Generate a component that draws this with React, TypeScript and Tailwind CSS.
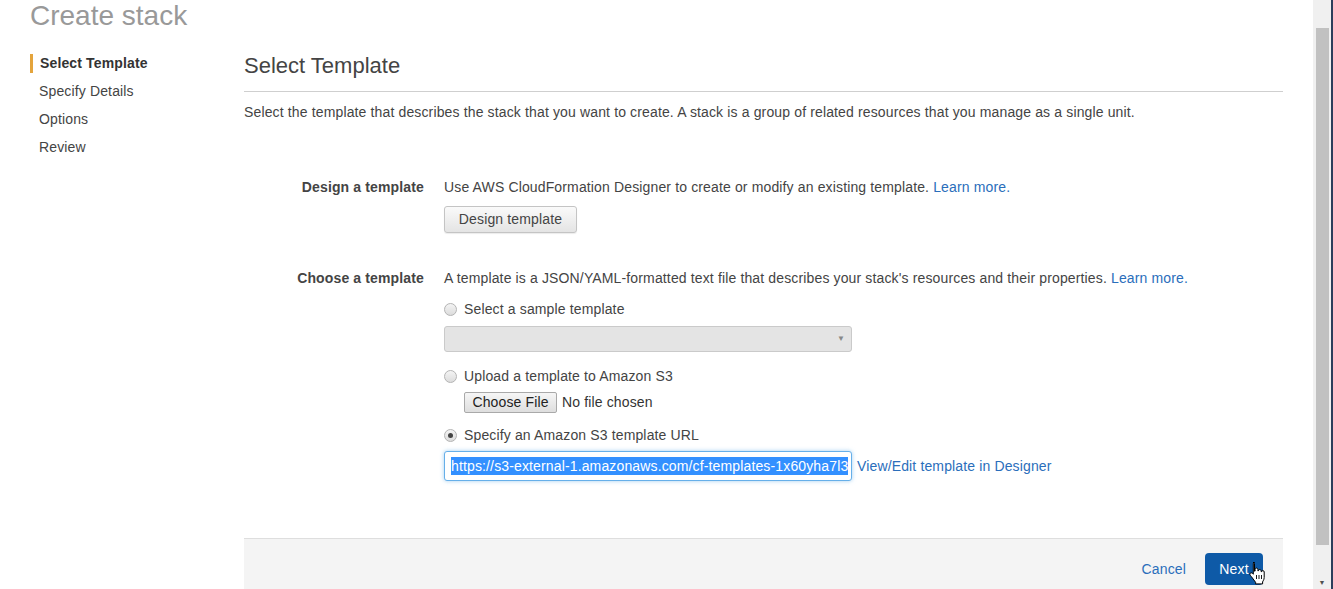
import React from 'react'

const font = { fontFamily: '"Liberation Sans", Arial, sans-serif' }

function Radio({ checked }: { checked?: boolean }) {
  return (
    <span className="w-[13px] h-[13px] rounded-full border border-[#b4b4b4] bg-gradient-to-b from-[#f4f4f4] to-[#dcdcdc] flex items-center justify-center shrink-0">
      {checked && <span className="w-[5px] h-[5px] rounded-full bg-[#444]" />}
    </span>
  )
}

function HandCursor() {
  return (
    <svg width="18" height="24" viewBox="0 0 18 24" className="absolute left-[1248px] top-[561px]">
      <path
        d="M5 1.5c.9 0 1.5.6 1.5 1.5v7.2l.6-.1V8.5c0-.9.6-1.4 1.4-1.4s1.4.6 1.4 1.4v1.4l.5-.1c0-.8.6-1.3 1.4-1.3s1.4.6 1.4 1.4v.9l.4-.1c.1-.7.6-1.1 1.3-1.1.8 0 1.3.6 1.3 1.4v5.4c0 1.4-.4 2.4-1 3.4l-.6 1.1v2H7.6v-1.6L3.5 15.8c-.8-.9-1.6-1.8-1.6-2.6 0-.8.7-1.4 1.5-1.3.4 0 .7.2 1 .4l.9.9V3c0-.9.4-1.5 1.2-1.5z"
        fill="#fff"
        stroke="#000"
        strokeWidth="1"
        strokeLinejoin="round"
      />
      <path d="M8.5 14v4M11 14v4M13.5 14v4" stroke="#000" strokeWidth="0.9" />
    </svg>
  )
}

export default function App() {
  const sidebar = ['Select Template', 'Specify Details', 'Options', 'Review']

  return (
    <div className="relative flex h-[589px] w-[1333px] overflow-hidden bg-white text-[14px] tracking-[0.14px] text-[#444]" style={font}>
      <div className="flex-1 flex flex-col">
        {/* page title */}
        <div className="h-[32px] pl-[30px] text-[28px] leading-[32px] tracking-normal text-[#999]">Create stack</div>

        <div className="flex pl-[30px] flex-1">
          {/* steps */}
          <div className="w-[214px] pt-[17px] flex flex-col">
            {sidebar.map((s, i) => (
              <div key={s} className="h-[28px] flex items-center">
                {i === 0 ? (
                  <>
                    <span className="w-[3px] h-[19px] bg-[#e4a43c] mr-[7px]" />
                    <span className="font-bold text-[#333]">{s}</span>
                  </>
                ) : (
                  <span className="pl-[9px] text-[#444]">{s}</span>
                )}
              </div>
            ))}
          </div>

          {/* main */}
          <div className="w-[1039px] flex flex-col pt-[22px]">
            <div className="h-[24px] leading-[24px] text-[22px] tracking-normal text-[#444]">Select Template</div>
            <div className="mt-[13px] border-b border-[#cfcfcf]" />
            <p className="mt-[10px] leading-[20px]">
              Select the template that describes the stack that you want to create. A stack is a group of related resources that you manage as a single unit.
            </p>

            {/* design row */}
            <div className="flex mt-[55px]">
              <div className="w-[180px] text-right font-bold leading-[20px]">Design a template</div>
              <div className="pl-[20px] flex flex-col items-start">
                <div className="leading-[20px]">
                  Use AWS CloudFormation Designer to create or modify an existing template.{' '}
                  <span className="text-[#2a6ebb]">Learn more.</span>
                </div>
                <button className="mt-[9px] w-[133px] h-[27px] rounded-[3px] border border-[#c4c4c4] bg-gradient-to-b from-[#fafafa] to-[#e4e4e4] text-[#444] text-[14px] tracking-[0.14px] shadow-[0_1px_1px_rgba(0,0,0,0.08)]">
                  Design template
                </button>
              </div>
            </div>

            {/* choose row */}
            <div className="flex mt-[35px]">
              <div className="w-[180px] text-right font-bold leading-[20px]">Choose a template</div>
              <div className="pl-[20px] flex flex-col items-start">
                <div className="leading-[20px]">
                  A template is a JSON/YAML-formatted text file that describes your stack's resources and their properties.{' '}
                  <span className="text-[#2a6ebb]">Learn more.</span>
                </div>

                <div className="mt-[11px] h-[20px] flex items-center gap-[7px]">
                  <Radio />
                  <span>Select a sample template</span>
                </div>
                <div className="mt-[7px] w-[408px] h-[26px] rounded-[3px] border border-[#cacaca] bg-[#e4e4e4] flex items-center justify-end pr-[6px]">
                  <span className="text-[8px] text-[#888]">▼</span>
                </div>

                <div className="mt-[14px] h-[20px] flex items-center gap-[7px]">
                  <Radio />
                  <span>Upload a template to Amazon S3</span>
                </div>
                <div className="mt-[6px] ml-[20px] flex items-center">
                  <button className="w-[93px] h-[21px] border border-[#a9a9a9] rounded-[2px] bg-gradient-to-b from-[#f6f6f6] to-[#dedede] text-[14px] tracking-[0.14px] text-[#222] leading-[19px]">
                    Choose File
                  </button>
                  <span className="ml-[5px] text-[#333]">No file chosen</span>
                </div>

                <div className="mt-[12px] h-[20px] flex items-center gap-[7px]">
                  <Radio checked />
                  <span>Specify an Amazon S3 template URL</span>
                </div>
                <div className="mt-[6px] flex items-center">
                  <div className="w-[408px] h-[30px] rounded-[3px] border border-[#66afe9] shadow-[0_0_4px_rgba(102,175,233,0.6)] bg-white flex items-center pl-[6px] overflow-hidden">
                    <span className="bg-[#3390ff] text-white whitespace-nowrap leading-[18px]">
                      https://s3-external-1.amazonaws.com/cf-templates-1x60yha7l3
                    </span>
                  </div>
                  <span className="ml-[5px] text-[#2a6ebb]">View/Edit template in Designer</span>
                </div>
              </div>
            </div>

            {/* footer */}
            <div className="mt-[57px] h-[70px] border-t border-[#dedede] bg-[#f4f4f4] flex justify-end items-start pt-[14px] pr-[20px]">
              <span className="mt-[6px] text-[#2a6ebb] text-[14px] leading-[20px]">Cancel</span>
              <button className="ml-[19px] w-[58px] h-[32px] rounded-[4px] bg-[#0e5aa7] text-white text-[14px] tracking-[0.14px] font-normal">
                Next
              </button>
            </div>
          </div>
        </div>
      </div>

      {/* browser scrollbar */}
      <div className="w-[20px] h-[589px] bg-[#f0f0f0] flex flex-col items-center border-r-[2px] border-[#2c3e5c]">
        <div className="h-[28px]" />
        <div className="w-[13px] h-[517px] bg-[#c1c1c1]" />
        <div className="flex-1 flex items-end pb-[3px]">
          <span className="text-[7px] text-[#505050] leading-none">▼</span>
        </div>
      </div>

      <HandCursor />
    </div>
  )
}
